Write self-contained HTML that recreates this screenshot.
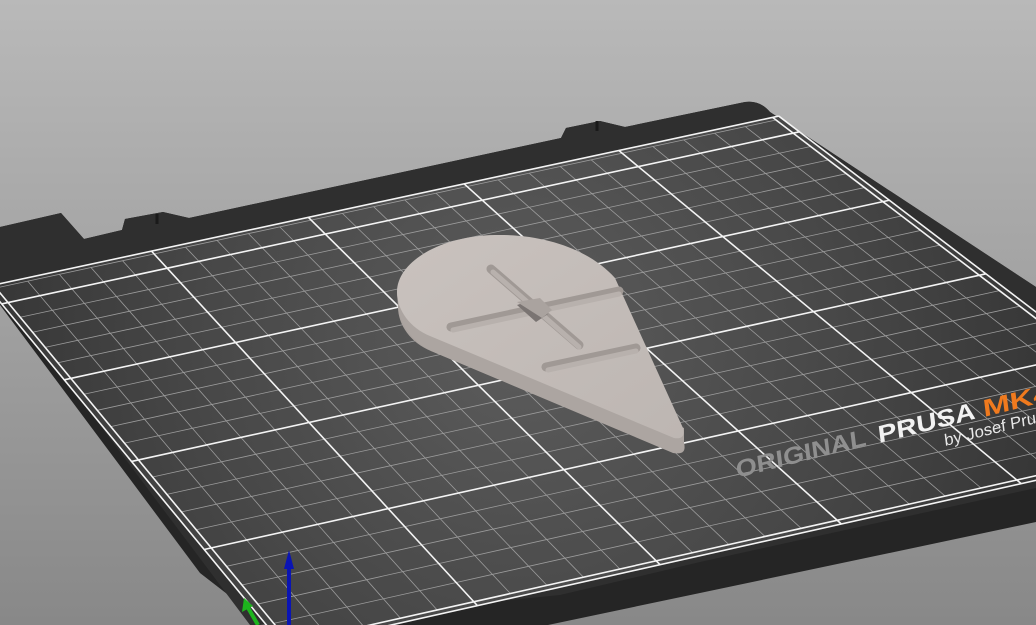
<!DOCTYPE html>
<html><head><meta charset="utf-8"><style>
html,body{margin:0;padding:0;width:1036px;height:625px;overflow:hidden;background:#a0a0a0}
svg{display:block}
</style></head><body>
<svg id="s" width="1036" height="625" viewBox="0 0 1036 625" xmlns="http://www.w3.org/2000/svg">
<defs>
<linearGradient id="bg" x1="0" y1="0" x2="0" y2="1">
<stop offset="0" stop-color="#b9b9b9"/><stop offset="1" stop-color="#888888"/></linearGradient>
<radialGradient id="bed" cx="520" cy="340" r="540" gradientUnits="userSpaceOnUse">
<stop offset="0" stop-color="#5c5c5c"/><stop offset="0.6" stop-color="#474747"/><stop offset="1" stop-color="#363636"/></radialGradient>
<linearGradient id="top" x1="0" y1="0" x2="1" y2="1">
<stop offset="0" stop-color="#c9c2be"/><stop offset="1" stop-color="#bdb6b2"/></linearGradient>
</defs>
<rect width="1036" height="625" fill="url(#bg)"/>
<path d="M0,227 L61,213 L84,239 L122,230 L125,219 L163,212 L189,218 L561,138 L566,128 L600,121 L625,127 L745,102 Q760,100 770,112 L1036,287 L1036,522 L700,593 L548,625 L267,625 L200,573 L0,305 Z" fill="#252525"/>
<path d="M0,227 L61,213 L84,239 L122,230 L125,219 L163,212 L189,218 L561,138 L566,128 L600,121 L625,127 L745,102 Q760,100 770,112 L1036,287 L1036,488 L700,562 L560,595 L260,625 L250,625 L0,292 Z" fill="#2f2f2f"/>
<path d="M597,121 L597,131" stroke="#1a1a1a" stroke-width="3"/>
<path d="M157,214 L157,224" stroke="#1a1a1a" stroke-width="3"/>
<g id="grid"></g>
<path transform="translate(1,15)" d="M397,292 C397,262 440,236 495,235 C545,234 590,250 615,278 L683,428 Q686,440 674,438 L430,336 C410,328 397,310 397,292 Z" fill="#a9a29e"/>
<path d="M397,292 L398,307 C400,324 411,340 431,351 L673,453 Q686,455 684,443 L684,428 Z" fill="#aca5a1"/>
<path d="M397,292 C397,262 440,236 495,235 C545,234 590,250 615,278 L683,428 Q686,440 674,438 L430,336 C410,328 397,310 397,292 Z" fill="url(#top)"/>
<g stroke-linecap="round" fill="none">
<line x1="491" y1="269" x2="579" y2="345" stroke="#a09995" stroke-width="9"/>
<line x1="451" y1="327" x2="619" y2="291" stroke="#a09995" stroke-width="9"/>
<line x1="546" y1="367" x2="636" y2="348" stroke="#a09995" stroke-width="9"/>
<line x1="493" y1="272" x2="579" y2="347" stroke="#b8b1ad" stroke-width="5"/>
<line x1="453" y1="330" x2="619" y2="294" stroke="#b8b1ad" stroke-width="5"/>
<line x1="548" y1="370" x2="636" y2="351" stroke="#b8b1ad" stroke-width="5"/>
</g>
<path d="M517,305 L532,300 L548,314 L536,322 Z" fill="#7a7472"/>
<path d="M517,302 L540,298 L552,310 L542,318 Z" fill="#aaa39f"/>
<line x1="289" y1="625" x2="289" y2="565" stroke="#0a14b4" stroke-width="4"/>
<path d="M284,569 L289,550 L294,569 Z" fill="#0a14b4"/>
<line x1="258" y1="625" x2="247" y2="606" stroke="#1db41d" stroke-width="4"/>
<path d="M242,612 L244,598 L253,606 Z" fill="#1db41d"/>
</svg>
<script>
(function(){
var NS="http://www.w3.org/2000/svg";
var P=[[290,643],[1195,440],[776,120],[-4,288]];
var x0=P[0][0],y0=P[0][1],x1=P[1][0],y1=P[1][1],x2=P[2][0],y2=P[2][1],x3=P[3][0],y3=P[3][1];
var dx1=x1-x2,dx2=x3-x2,dx3=x0-x1+x2-x3,dy1=y1-y2,dy2=y3-y2,dy3=y0-y1+y2-y3;
var den=dx1*dy2-dx2*dy1;
var g=(dx3*dy2-dx2*dy3)/den,h=(dx1*dy3-dx3*dy1)/den;
var a=x1-x0+g*x1,b=x3-x0+h*x3,c=x0,d=y1-y0+g*y1,e=y3-y0+h*y3,f=y0;
function M(u,v){var s=u/250,t=v/210,w=g*s+h*t+1;return [(a*s+b*t+c)/w,(d*s+e*t+f)/w];}
var G=document.getElementById("grid");
function poly(pts,fill){var p=document.createElementNS(NS,"polygon");p.setAttribute("points",pts.map(function(q){return q.join(",")}).join(" "));p.setAttribute("fill",fill);G.appendChild(p);}
poly([M(-2,-2),M(252,-2),M(252,212),M(-2,212)],"url(#bed)");
function ln(A,B,col,w){var l=document.createElementNS(NS,"line");l.setAttribute("x1",A[0]);l.setAttribute("y1",A[1]);l.setAttribute("x2",B[0]);l.setAttribute("y2",B[1]);l.setAttribute("stroke",col);l.setAttribute("stroke-width",w);G.appendChild(l);}
var u,v;
for(u=0;u<=250;u+=10){if(u%50)ln(M(u,0),M(u,210),"#9c9c9c",0.8);}
for(v=0;v<=210;v+=10){if(v%50)ln(M(0,v),M(250,v),"#9c9c9c",0.8);}
for(u=0;u<=250;u+=50)ln(M(u,-2),M(u,212),"#f4f4f4",1.6);
for(v=0;v<=200;v+=50)ln(M(-2,v),M(252,v),"#f4f4f4",1.6);
ln(M(-2,-2),M(252,-2),"#f4f4f4",1.6);ln(M(-2,212),M(252,212),"#f4f4f4",1.6);
ln(M(-2,-2),M(-2,212),"#f4f4f4",1.6);ln(M(252,-2),M(252,212),"#f4f4f4",1.6);
})();
</script>
<svg width="1036" height="625" style="position:absolute;left:0;top:0" xmlns="http://www.w3.org/2000/svg">
<g font-family="Liberation Sans, sans-serif" font-weight="bold">
<text transform="matrix(0.97,-0.245,0.12,0.95,737,478)" font-size="25" fill="#8f8f8f" textLength="134" lengthAdjust="spacingAndGlyphs">ORIGINAL</text>
<text transform="matrix(0.97,-0.245,0.12,0.95,879,443)" font-size="25" fill="#f2f2f2" textLength="100" lengthAdjust="spacingAndGlyphs">PRUSA</text>
<text transform="matrix(0.97,-0.245,0.12,0.95,984,417)" font-size="25" fill="#f07a1e" textLength="70" lengthAdjust="spacingAndGlyphs">MK4</text>
<text transform="matrix(0.97,-0.245,0.12,0.95,945,446)" font-size="17" font-weight="normal" fill="#e8e8e8">by Josef Prusa</text>
</g>
</svg>
</body></html>
